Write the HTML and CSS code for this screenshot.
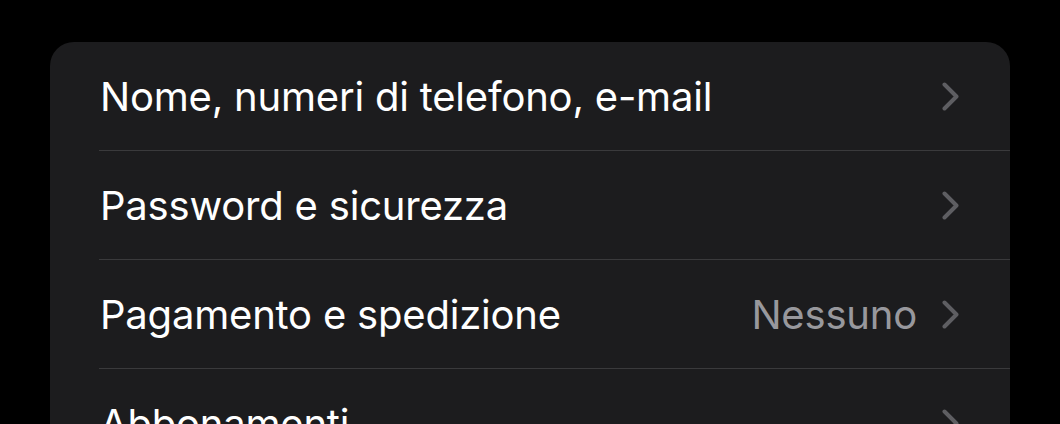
FILE: index.html
```html
<!DOCTYPE html>
<html lang="it">
<head>
<meta charset="utf-8">
<link rel="stylesheet" href="styles.css">
</head>
<body>
<div class="card">
  <div class="row"><span class="label">Nome, numeri di telefono, e-mail</span><span class="right"><svg class="chev" viewBox="0 0 17 29"><polyline points="2.5,2.5 14.5,14.5 2.5,26.5"/></svg></span></div>
  <div class="row"><span class="label">Password e sicurezza</span><span class="right"><svg class="chev" viewBox="0 0 17 29"><polyline points="2.5,2.5 14.5,14.5 2.5,26.5"/></svg></span></div>
  <div class="row"><span class="label">Pagamento e spedizione</span><span class="right"><span class="value">Nessuno</span><svg class="chev" viewBox="0 0 17 29"><polyline points="2.5,2.5 14.5,14.5 2.5,26.5"/></svg></span></div>
  <div class="row"><span class="label">Abbonamenti</span><span class="right"><svg class="chev" viewBox="0 0 17 29"><polyline points="2.5,2.5 14.5,14.5 2.5,26.5"/></svg></span></div>
</div>
</body>
</html>
```
FILE: styles.css
```css
html, body {
  margin: 0;
  padding: 0;
  background: #000;
  height: 424px;
  overflow: hidden;
}
body {
  padding: 42px 0 0 50px;
  font-family: Inter, "Noto Sans", sans-serif;
}
.card {
  width: 960px;
  background: #1c1c1e;
  border-radius: 24px 24px 0 0;
  overflow: hidden;
}
.row {
  margin-left: 49px;
  height: 108px;
  border-bottom: 1px solid #3a3a3c;
  display: flex;
  align-items: center;
  justify-content: space-between;
  padding-right: 51px;
}
.label {
  color: #fff;
  font-size: 40px;
  letter-spacing: -0.2px;
  padding-left: 1px;
}
.right {
  display: flex;
  align-items: center;
  gap: 25px;
}
.value {
  color: #98989d;
  font-size: 40px;
  letter-spacing: -0.2px;
}
.chev {
  width: 17px;
  height: 29px;
  fill: none;
  stroke: #5e5e62;
  stroke-width: 4;
  stroke-linecap: round;
  stroke-linejoin: round;
}
```
